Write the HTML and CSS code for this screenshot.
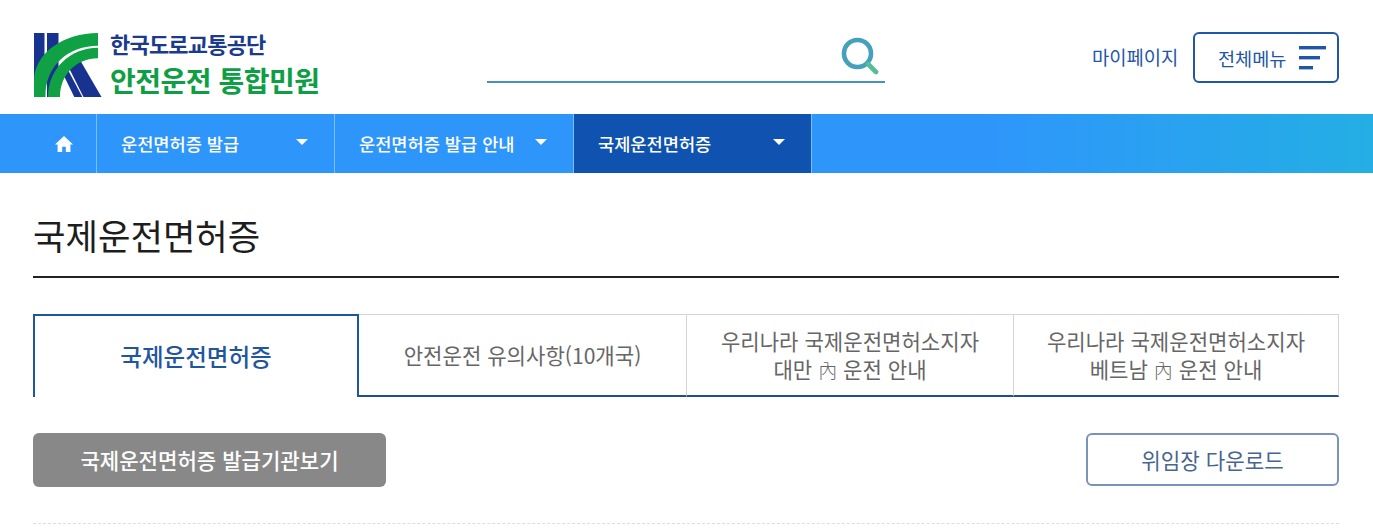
FILE: index.html
```html
<!DOCTYPE html>
<html lang="ko">
<head>
<meta charset="utf-8">
<title>국제운전면허증</title>
<link rel="stylesheet" href="styles.css">
</head>
<body>
<header class="header">
  <a class="logo">
    <svg class="logo-mark" width="68" height="64" viewBox="0 0 68 64">
      <rect x="0" y="0" width="10.5" height="64" fill="#17338f"/>
      <rect x="13" y="0" width="11.5" height="64" fill="#17338f"/>
      <polygon points="35,35 46,27 67.5,64 49.5,64" fill="#17338f"/>
      <polygon points="30,43 34,37 48.3,64 40.3,64" fill="#17338f"/>
      <path d="M0 64V48C0 20 30 0 64 0V12.7C35 12.7 11 32 11.5 64Z" fill="#0fa144"/>
      <path d="M14 64C14 36 36 14.7 64 14.7V25.3C42 25.3 26 42 26 64Z" fill="#0fa144"/>
    </svg>
    <span class="logo-text">
      <span class="logo-org">한국도로교통공단</span>
      <span class="logo-name">안전운전 통합민원</span>
    </span>
  </a>
  <div class="search">
    <svg width="38" height="38" viewBox="0 0 38 38" fill="none">
      <circle cx="16.5" cy="16.5" r="13.5" stroke="#44a0bd" stroke-width="4.6"/>
      <path d="M27 27L35 35" stroke="#55bd95" stroke-width="4.6" stroke-linecap="round"/>
    </svg>
  </div>
  <a class="mypage">마이페이지</a>
  <button class="allmenu">전체메뉴
    <svg width="27" height="24" viewBox="0 0 27 24"><rect x="0" y="0" width="27" height="3.4" fill="#1f56a6"/><rect x="0" y="10" width="21" height="3.4" fill="#1f56a6"/><rect x="0" y="20" width="14" height="3.4" fill="#1f56a6"/></svg>
  </button>
</header>
<nav class="nav">
  <a class="nav-home"><svg width="18" height="16" viewBox="0 0 18 16"><path d="M9 0L18 8.4H15.4V16H10.8V10.8H7.2V16H2.6V8.4H0Z" fill="#fff"/></svg></a>
  <a class="nav-item">운전면허증 발급<i class="caret"></i></a>
  <a class="nav-item">운전면허증 발급 안내<i class="caret"></i></a>
  <a class="nav-item active">국제운전면허증<i class="caret"></i></a>
</nav>
<main class="main">
  <h1 class="title">국제운전면허증</h1>
  <ul class="tabs">
    <li class="tab on">국제운전면허증</li>
    <li class="tab">안전운전 유의사항(10개국)</li>
    <li class="tab">우리나라 국제운전면허소지자<br>대만 <span class="han">內</span> 운전 안내</li>
    <li class="tab">우리나라 국제운전면허소지자<br>베트남 <span class="han">內</span> 운전 안내</li>
  </ul>
  <div class="actions">
    <a class="btn-gray">국제운전면허증 발급기관보기</a>
    <a class="btn-line">위임장 다운로드</a>
  </div>
  <div class="dash"></div>
</main>
</body>
</html>
```
FILE: styles.css
```css
* { box-sizing: border-box; }
html, body { margin: 0; padding: 0; height: 529px; overflow: hidden; background: #fff; }
body { font-family: "Noto Sans CJK KR", "Noto Sans", sans-serif; color: #222; }
.header { height: 114px; display: flex; align-items: flex-start; padding: 32px 34px 0 34px; }
.logo { display: flex; width: 453px; padding-top: 1px; flex: none; }
.logo-mark { flex: none; }
.logo-text { display: flex; flex-direction: column; margin-left: 8px; }
.logo-org { font-size: 22px; font-weight: 700; line-height: 24px; color: #1b3a8c; letter-spacing: -0.8px; margin-top: -2px; }
.logo-name { font-size: 28px; font-weight: 700; line-height: 34px; color: #0e9f45; letter-spacing: -0.5px; margin-top: 8px; }
.search { width: 398px; height: 51px; border-bottom: 2px solid #4a8fc2; display: flex; justify-content: flex-end; padding: 5px 6px 0 0; flex: none; }
.mypage { margin-left: 207px; font-size: 18.8px; line-height: 50px; color: #1f56a6; white-space: nowrap; }
.allmenu { margin-left: auto; width: 146px; height: 51px; border: 2px solid #1f56a6; border-radius: 6px; background: #fff; color: #1f56a6; font: 400 18.6px "Noto Sans CJK KR", sans-serif; display: flex; align-items: center; padding: 0 11px 1px 23px; justify-content: space-between; }
.allmenu svg { margin-top: 1px; }
.nav { height: 59px; display: flex; padding-left: 33px; background: linear-gradient(90deg, #2e96fb 0, #2e96fb 72%, #24aee4 100%); }
.nav-home { width: 64px; display: flex; align-items: center; justify-content: center; padding-right: 1px; border-right: 1px solid #7dbdfb; }
.nav-item { width: 238px; display: flex; align-items: center; position: relative; padding-left: 24px; border-right: 1px solid #7dbdfb; color: #fff; font-size: 17.6px; font-weight: 500; }
.nav-item:nth-child(3) { width: 239px; }
.nav-item.active { background: #0f52b0; }
.caret { position: absolute; right: 26px; top: 25px; border: 6px solid transparent; border-top: 6px solid #fff; border-bottom: 0; }
.main { padding: 0 34px 0 33px; }
.title { margin: 0; height: 105px; padding-top: 37px; border-bottom: 2px solid #222; font-size: 35.3px; font-weight: 400; line-height: 50px; color: #1d1d1d; }
.tabs { list-style: none; margin: 36px 0 0; padding: 0; display: grid; grid-template-columns: 326px 328px 327px 325px; height: 83px; }
.tab { display: flex; align-items: center; justify-content: center; text-align: center; border-top: 1px solid #d5d5d5; border-right: 1px solid #d5d5d5; border-bottom: 2px solid #1f4f92; font-size: 21.1px; line-height: 28px; color: #666; }
.tab:nth-child(3), .tab:nth-child(4) { display: block; padding-top: 12px; }
.tab.on { border: 2px solid #1f56a0; border-bottom: 0; color: #1f56a0; font-size: 23.5px; font-weight: 500; padding-bottom: 2px; }
.han { font-size: 19px; font-weight: 300; }
.actions { display: flex; justify-content: space-between; align-items: flex-start; margin-top: 36px; }
.btn-gray { width: 353px; height: 54px; background: #888; border-radius: 6px; color: #fff; font-size: 21.1px; font-weight: 500; display: flex; align-items: center; justify-content: center; }
.btn-line { width: 253px; height: 53px; border: 2px solid #7a93b8; border-radius: 6px; color: #47658f; font-size: 21.2px; display: flex; align-items: center; justify-content: center; }
.dash { margin-top: 36px; border-top: 1px dashed #ddd; }
```
